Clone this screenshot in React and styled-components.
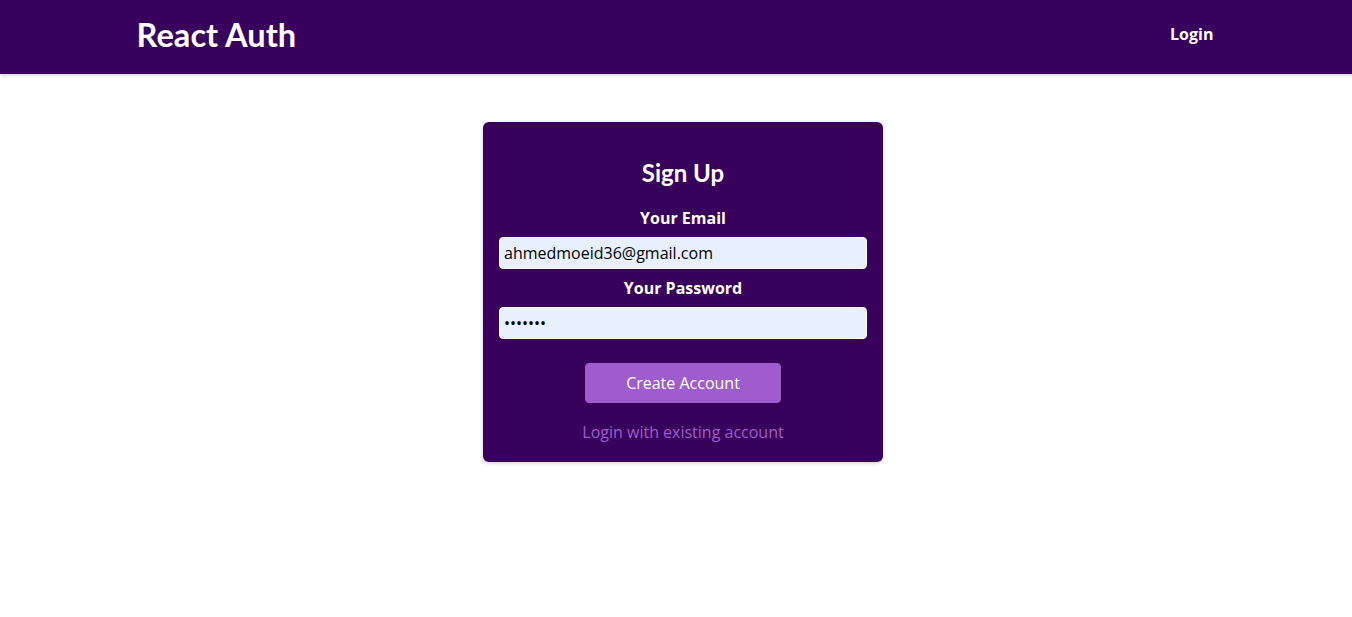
import React from "react";
import styled, { createGlobalStyle } from "styled-components";

const GlobalStyle = createGlobalStyle`
  * { box-sizing: border-box; }
  html, body { margin: 0; padding: 0; }
  body {
    font-family: "Open Sans", "Noto Sans", sans-serif;
    font-size: 16px;
    background: #ffffff;
    overflow-x: hidden;
  }
`;

const Page = styled.div`
  width: 1366px;
`;

const Header = styled.header`
  width: 100%;
  height: 74px;
  background-color: #38015c;
  box-shadow: 0 1px 4px rgba(0, 0, 0, 0.2);
  display: flex;
  justify-content: space-between;
  align-items: center;
  padding: 0 10% 6px;
`;

const Logo = styled.div`
  font-family: "Lato", sans-serif;
  font-size: 32.6px;
  font-weight: bold;
  color: #ffffff;
  margin: 0;
`;

const NavList = styled.ul`
  list-style: none;
  margin: 0;
  padding: 0;
  display: flex;
  align-items: baseline;
`;

const NavItem = styled.li`
  margin: 0 16px;
`;

const NavLink = styled.a`
  font-family: "Open Sans", sans-serif;
  font-size: 16px;
  font-weight: bold;
  color: #ffffff;
  text-decoration: none;
  cursor: pointer;
`;

const Main = styled.main`
  padding: 0;
`;

const Card = styled.section`
  margin: 48px auto;
  width: 95%;
  max-width: 400px;
  border-radius: 6px;
  background-color: #38015c;
  box-shadow: 0 1px 4px rgba(0, 0, 0, 0.2);
  padding: 16px;
  text-align: center;
`;

const Title = styled.h1`
  font-family: "Lato", sans-serif;
  font-size: 24px;
  font-weight: bold;
  line-height: normal;
  color: #ffffff;
  margin: 19.92px 0;
`;

const Control = styled.div`
  margin-bottom: 8px;
`;

const Label = styled.label`
  display: block;
  color: #ffffff;
  font-weight: bold;
  line-height: 22px;
  margin-bottom: 8px;
`;

const Input = styled.input`
  font: inherit;
  line-height: 22px;
  display: block;
  width: 100%;
  height: 32px;
  background-color: #e8f0fe;
  color: #000000;
  border: 1px solid #ffffff;
  border-radius: 4px;
  padding: 4px;
  text-align: left;
  outline: none;
`;

const Actions = styled.div`
  margin-top: 24px;
  display: flex;
  flex-direction: column;
  align-items: center;
`;

const PrimaryButton = styled.button`
  cursor: pointer;
  font: inherit;
  line-height: 22px;
  color: #ffffff;
  background-color: #9f5ccc;
  border: 1px solid #9f5ccc;
  border-radius: 4px;
  padding: 8px 40px;
`;

const ToggleButton = styled.button`
  cursor: pointer;
  font: inherit;
  line-height: 22px;
  margin-top: 16px;
  background-color: transparent;
  color: #9f5ccc;
  border: none;
  padding: 2.4px 24px;
`;

export default function App() {
  return (
    <Page>
      <GlobalStyle />
      <Header>
        <Logo>React Auth</Logo>
        <nav>
          <NavList>
            <NavItem>
              <NavLink>Login</NavLink>
            </NavItem>
          </NavList>
        </nav>
      </Header>
      <Main>
        <Card>
          <Title>Sign Up</Title>
          <form onSubmit={(e) => e.preventDefault()}>
            <Control>
              <Label htmlFor="email">Your Email</Label>
              <Input id="email" type="email" defaultValue="ahmedmoeid36@gmail.com" />
            </Control>
            <Control>
              <Label htmlFor="password">Your Password</Label>
              <Input id="password" type="password" defaultValue="1234567" />
            </Control>
            <Actions>
              <PrimaryButton type="submit">Create Account</PrimaryButton>
              <ToggleButton type="button">Login with existing account</ToggleButton>
            </Actions>
          </form>
        </Card>
      </Main>
    </Page>
  );
}
